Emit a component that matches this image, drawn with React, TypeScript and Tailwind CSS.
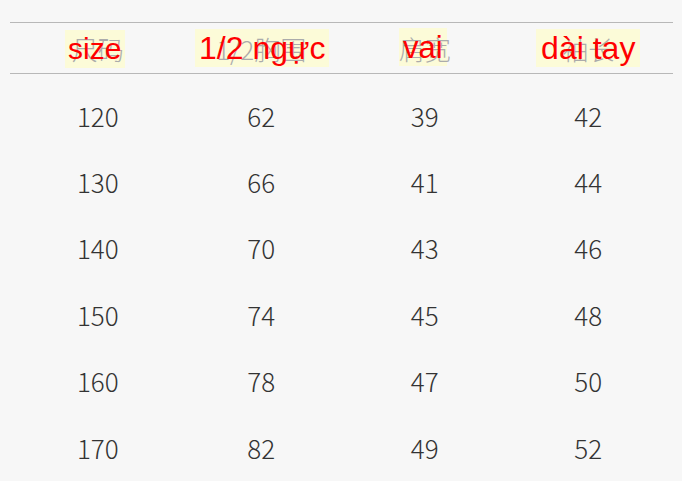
const rows = [
  ["120", "62", "39", "42"],
  ["130", "66", "41", "44"],
  ["140", "70", "43", "46"],
  ["150", "74", "45", "48"],
  ["160", "78", "47", "50"],
  ["170", "82", "49", "52"],
];

// Chinese header with Vietnamese labels pasted over it
const headers = [
  { zh: "尺码", vi: "size", box: "w-[60px] ml-[-6px] mt-[1px]", size: "text-[30px]" },
  { zh: "1/2胸围", vi: "1/2 ngực", box: "w-[134px] ml-[2px]", size: "text-[32px]" },
  { zh: "肩宽", vi: "vai", box: "w-[48px] ml-[-4px] mt-[-2px]", size: "text-[31px]" },
  { zh: "袖长", vi: "dài tay", box: "w-[104px] ml-[0px] mt-[-1px]", size: "text-[32px]" },
];

const cjk = { fontFamily: '"Noto Sans CJK SC", "Noto Sans", sans-serif' };
const latin = { fontFamily: '"Liberation Sans", Arial, sans-serif' };

export default function App() {
  return (
    <div className="w-[682px] h-[481px] bg-[#f7f7f7] overflow-hidden pt-[22px]">
      <div className="mx-[10px] w-[663px]">
        <div className="h-[52px] border-y border-[#b8b8b8] grid grid-cols-4 pl-[6px] pr-[3px]" style={cjk}>
          {headers.map((h) => (
            <div key={h.vi} className="relative flex items-center justify-center">
              <div className="absolute inset-0 flex items-center justify-center">
                <div className={`${h.box} h-[38px] bg-[#fcfbd8]`} />
              </div>
              <span className="relative text-[26px] text-[#ababab] font-light">{h.zh}</span>
              <div className="absolute inset-0 flex items-center justify-center">
                <div
                  className={`${h.box} ${h.size} h-[38px] text-[#ff0000] flex items-center justify-center leading-none`}
                  style={latin}
                >
                  {h.vi}
                </div>
              </div>
            </div>
          ))}
        </div>
        <div className="pt-[8px] pl-[6px] pr-[3px]" style={cjk}>
          {rows.map((r) => (
            <div key={r[0]} className="grid grid-cols-4 h-[66.4px] items-center">
              {r.map((c, i) => (
                <div key={i} className="text-center text-[26px] text-[#333] font-light">
                  {c}
                </div>
              ))}
            </div>
          ))}
        </div>
      </div>
    </div>
  );
}
